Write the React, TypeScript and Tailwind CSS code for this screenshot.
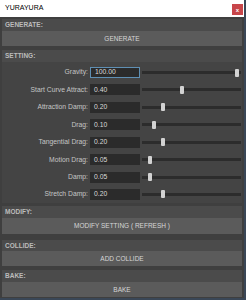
import React from 'react';

const FONT = { fontFamily: '"Liberation Sans", Arial, sans-serif' };

type Param = { label: string; value: string; pos: number; focused?: boolean };

const PARAMS: Param[] = [
  { label: 'Gravity:', value: '100.00', pos: 1, focused: true },
  { label: 'Start Curve Attract:', value: '0.40', pos: 0.4 },
  { label: 'Attraction Damp:', value: '0.20', pos: 0.2 },
  { label: 'Drag:', value: '0.10', pos: 0.1 },
  { label: 'Tangential Drag:', value: '0.20', pos: 0.2 },
  { label: 'Motion Drag:', value: '0.05', pos: 0.05 },
  { label: 'Damp:', value: '0.05', pos: 0.05 },
  { label: 'Stretch Damp:', value: '0.20', pos: 0.2 },
];

function Header({ title, className = '' }: { title: string; className?: string }) {
  return (
    <div className={`flex items-center bg-[#4b4b4b] px-[3px] text-[6.5px] font-bold text-[#bcbcbc] ${className}`}>
      {title}
    </div>
  );
}

function Button({ label, className = '' }: { label: string; className?: string }) {
  return (
    <div className={`flex items-center justify-center bg-[#5b5b5b] text-[6.5px] text-[#d6d6d6] ${className}`}>
      {label}
    </div>
  );
}

function SliderRow({ p }: { p: Param }) {
  // handle centre sits 3px into the track and travels 92px
  const left = 3 + p.pos * 92 - 2;
  return (
    <div className="flex h-[11px] items-center">
      <div className="w-[87px] pr-[1px] text-right text-[6.8px] text-[#c4c4c4]">{p.label}</div>
      <div
        className={`ml-[1px] flex h-[11px] w-[50px] items-center bg-[#2b2b2b] px-[4px] text-[6.8px] text-[#d8d8d8] ${
          p.focused ? 'border border-[#5f8fb3] px-[3px]' : ''
        }`}
      >
        {p.value}
      </div>
      <div className="relative ml-[2px] flex h-[11px] w-[99px] items-center">
        <div className="h-[3px] w-full bg-[#2c2c2c]" />
        <div
          className="absolute top-[1.5px] h-[8px] w-[4px] rounded-[1px] bg-[#d2d2d2]"
          style={{ left }}
        />
      </div>
    </div>
  );
}

export default function App() {
  return (
    <div style={FONT} className="flex h-[300px] w-[246px] flex-col border-b-2 border-r-2 border-[#3a4757] bg-[#3f3f3f]">
      {/* Title bar */}
      <div className="flex h-[17px] shrink-0 items-center justify-between bg-white pl-[5px] pr-[1px]">
        <span className="text-[7px] text-black">YURAYURA</span>
        <div className="mt-[2px] flex h-[11px] w-[11px] items-center justify-center bg-[#c8464a] text-[6px] font-bold leading-none text-white">
          x
        </div>
      </div>

      <div className="flex flex-col px-[2px] pt-[2px]">
        <Header title="GENERATE:" className="h-[12px]" />
        <Button label="GENERATE" className="h-[15px]" />

        <Header title="SETTING:" className="mt-[4px] h-[12px]" />
        <div className="flex flex-col gap-[6.43px] bg-[#444444] pb-[3px] pt-[5px]">
          {PARAMS.map((p) => (
            <SliderRow key={p.label} p={p} />
          ))}
        </div>

        <Header title="MODIFY:" className="mt-[3px] h-[12px]" />
        <Button label="MODIFY SETTING ( REFRESH )" className="h-[16px]" />

        <Header title="COLLIDE:" className="mt-[6px] h-[11px]" />
        <Button label="ADD COLLIDE" className="h-[15px]" />

        <Header title="BAKE:" className="mt-[4px] h-[12px]" />
        <Button label="BAKE" className="h-[15px]" />
      </div>
    </div>
  );
}
